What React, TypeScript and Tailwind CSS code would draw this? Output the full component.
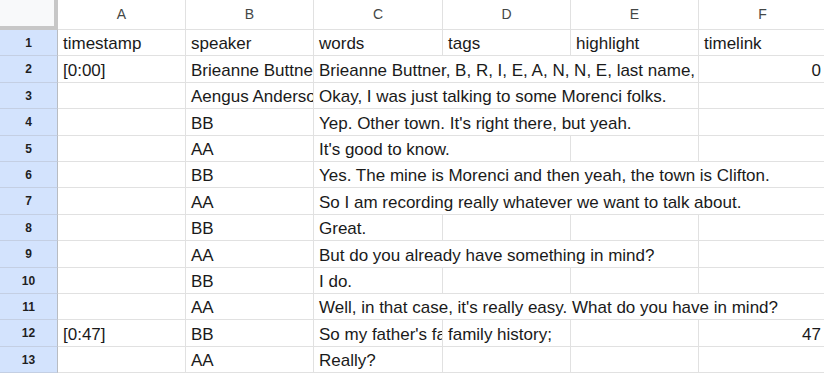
import React from "react";

type Cell = { text?: string; span?: number; align?: "left" | "right" };

const columns = ["A", "B", "C", "D", "E", "F"];

const spanClass: Record<number, string> = {
  1: "col-span-1",
  2: "col-span-2",
  3: "col-span-3",
  4: "col-span-4",
};

// row heights follow the 26.4px pitch of the screenshot
const rowHeights = [
  "h-[26px]",
  "h-[27px]",
  "h-[26px]",
  "h-[27px]",
  "h-[26px]",
  "h-[26px]",
  "h-[27px]",
  "h-[26px]",
  "h-[27px]",
  "h-[26px]",
  "h-[26px]",
  "h-[27px]",
  "h-[26px]",
];

const rows: Cell[][] = [
  [
    { text: "timestamp" },
    { text: "speaker" },
    { text: "words" },
    { text: "tags" },
    { text: "highlight" },
    { text: "timelink" },
  ],
  [
    { text: "[0:00]" },
    { text: "Brieanne Buttner" },
    { text: "Brieanne Buttner, B, R, I, E, A, N, N, E, last name,", span: 3 },
    { text: "0", align: "right" },
  ],
  [
    {},
    { text: "Aengus Anderson" },
    { text: "Okay, I was just talking to some Morenci folks.", span: 3 },
    {},
  ],
  [{}, { text: "BB" }, { text: "Yep. Other town. It's right there, but yeah.", span: 3 }, {}],
  [{}, { text: "AA" }, { text: "It's good to know.", span: 2 }, {}, {}],
  [
    {},
    { text: "BB" },
    { text: "Yes. The mine is Morenci and then yeah, the town is Clifton.", span: 4 },
  ],
  [
    {},
    { text: "AA" },
    { text: "So I am recording really whatever we want to talk about.", span: 4 },
  ],
  [{}, { text: "BB" }, { text: "Great." }, {}, {}, {}],
  [{}, { text: "AA" }, { text: "But do you already have something in mind?", span: 3 }, {}],
  [{}, { text: "BB" }, { text: "I do." }, {}, {}, {}],
  [
    {},
    { text: "AA" },
    { text: "Well, in that case, it's really easy. What do you have in mind?", span: 4 },
  ],
  [
    { text: "[0:47]" },
    { text: "BB" },
    { text: "So my father's family" },
    { text: "family history;" },
    {},
    { text: "47", align: "right" },
  ],
  [{}, { text: "AA" }, { text: "Really?" }, {}, {}, {}],
];

const gridCols = "grid grid-cols-[58px_128px_128px_129px_128px_128px_128px]";

export default function App() {
  return (
    <div
      className="h-[374px] w-[824px] overflow-hidden bg-white text-[#1a1a1a]"
      style={{ fontFamily: '"Liberation Sans", Arial, sans-serif' }}
    >
      <div className={`${gridCols} h-[30px]`}>
        <div className="border-b-4 border-r-4 border-[#c7c7c7] bg-[#f8f9fa]" />
        {columns.map((col) => (
          <div
            key={col}
            className="flex items-center justify-center border-b border-r border-[#e1e1e1] bg-white pb-[1px] text-[14px] text-[#444746]"
          >
            {col}
          </div>
        ))}
      </div>

      {rows.map((cells, i) => (
        <div key={i} className={`${gridCols} ${rowHeights[i]}`}>
          <div className="flex items-center justify-center border-b border-r border-b-[#c4cfe3] border-r-[#b8bcc2] bg-[#d3e3fd] text-[12px] font-bold text-[#1f1f1f]">
            {i + 1}
          </div>
          {cells.map((cell, j) => (
            <div
              key={j}
              className={`${spanClass[cell.span ?? 1]} flex items-end overflow-hidden whitespace-nowrap border-b border-r border-[#e1e1e1] pb-[1px] pl-[5px] text-[17px] leading-[20px] ${
                cell.align === "right" ? "justify-end pr-[5px]" : "justify-start pr-[3px]"
              }`}
            >
              {cell.text}
            </div>
          ))}
        </div>
      ))}
    </div>
  );
}
